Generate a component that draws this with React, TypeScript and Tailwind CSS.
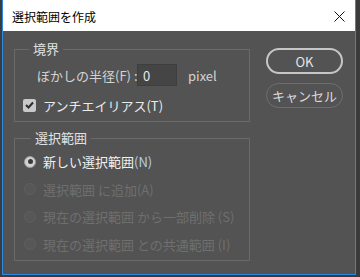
import React from 'react';

const options = [
  { label: '新しい選択範囲', key: '(N)', on: true },
  { label: '選択範囲 に追加', key: '(A)', on: false },
  { label: '現在の選択範囲 から一部削除 ', key: '(S)', on: false },
  { label: '現在の選択範囲 との共通範囲 ', key: '(I)', on: false },
];

function Radio({ on }: { on: boolean }) {
  if (on) {
    return (
      <span className="w-[12px] h-[12px] rounded-full bg-[#d2d2d2] border border-[#9a9a9a] flex items-center justify-center">
        <span className="w-[5px] h-[5px] rounded-full bg-[#3a3a3a]" />
      </span>
    );
  }
  return <span className="w-[12px] h-[12px] rounded-full bg-[#575757] border border-[#5f5f5f]" />;
}

export default function App() {
  return (
    <div className="w-[360px] h-[277px] bg-[#3b3b3b] font-['Noto_Sans_CJK_JP',sans-serif] leading-none">
      <div className="ml-[2px] w-[354px] h-[275px] border-x border-b border-[#2b8ae0] flex flex-col bg-[#535353]">
        <div className="h-[31px] bg-white flex items-center justify-between pl-[9px] pr-[10px] pt-[3px]">
          <span className="text-[12px] text-black">選択範囲を作成</span>
          <svg width="11" height="11" viewBox="0 0 11 11" className="mb-[2px]">
            <path d="M0.5 0.5L10.5 10.5M10.5 0.5L0.5 10.5" stroke="#111" strokeWidth="1" />
          </svg>
        </div>

        <div className="flex flex-1 pl-[11px] pr-[12px]">
          <div className="w-[236px] pt-[9px] flex flex-col gap-[7px]">
            <fieldset className="border border-[#6a6a6a] pb-[6px]">
              <legend className="ml-[14px] px-[4px] text-[13px] leading-[18px] text-[#e2e2e2]">境界</legend>
              <div className="flex items-center pl-[22px] pt-[6px] text-[13px] text-[#d4d4d4]">
                <span className="w-[100px] whitespace-nowrap">ぼかしの半径(F) :</span>
                <div className="w-[40px] h-[22px] bg-[#454545] border border-[#3e3e3e] flex items-center pl-[5px] text-[#e8e8e8]">
                  0
                </div>
                <span className="ml-[11px]">pixel</span>
              </div>
              <div className="flex items-center h-[20px] mt-[9px] pl-[8px]">
                <span className="w-[13px] h-[13px] rounded-[2px] bg-[#c9c9c9] flex items-center justify-center">
                  <svg width="9" height="8" viewBox="0 0 9 8">
                    <path d="M1 4L3.5 6.5L8 1.5" stroke="#2e2e2e" strokeWidth="2" fill="none" />
                  </svg>
                </span>
                <span className="ml-[7px] text-[13px] text-[#ececec]">アンチエイリアス(T)</span>
              </div>
            </fieldset>

            <fieldset className="border border-[#6a6a6a] pt-[1px] pb-[2px]">
              <legend className="ml-[16px] px-[4px] text-[13px] leading-[18px] text-[#e2e2e2]">選択範囲</legend>
              {options.map((o) => (
                <div key={o.key} className="flex items-center h-[27.5px] pl-[9px]">
                  <Radio on={o.on} />
                  <span
                    className={
                      o.on
                        ? 'ml-[7px] text-[13px] whitespace-pre text-[#f0f0f0]'
                        : 'ml-[7px] text-[13px] whitespace-pre text-[#6f6f6f]'
                    }
                  >
                    {o.label}
                    <span className={o.on ? 'text-[#b4cfee]' : ''}>{o.key}</span>
                  </span>
                </div>
              ))}
            </fieldset>
          </div>

          <div className="ml-auto pt-[17px] flex flex-col gap-[9px]">
            <button className="w-[77px] h-[26px] rounded-full border-2 border-[#c6c6c6] text-[13px] text-[#e6e6e6]">
              OK
            </button>
            <button className="w-[77px] h-[25px] rounded-full border border-[#6e6e6e] text-[13px] text-[#dadada]">
              キャンセル
            </button>
          </div>
        </div>
      </div>
    </div>
  );
}
